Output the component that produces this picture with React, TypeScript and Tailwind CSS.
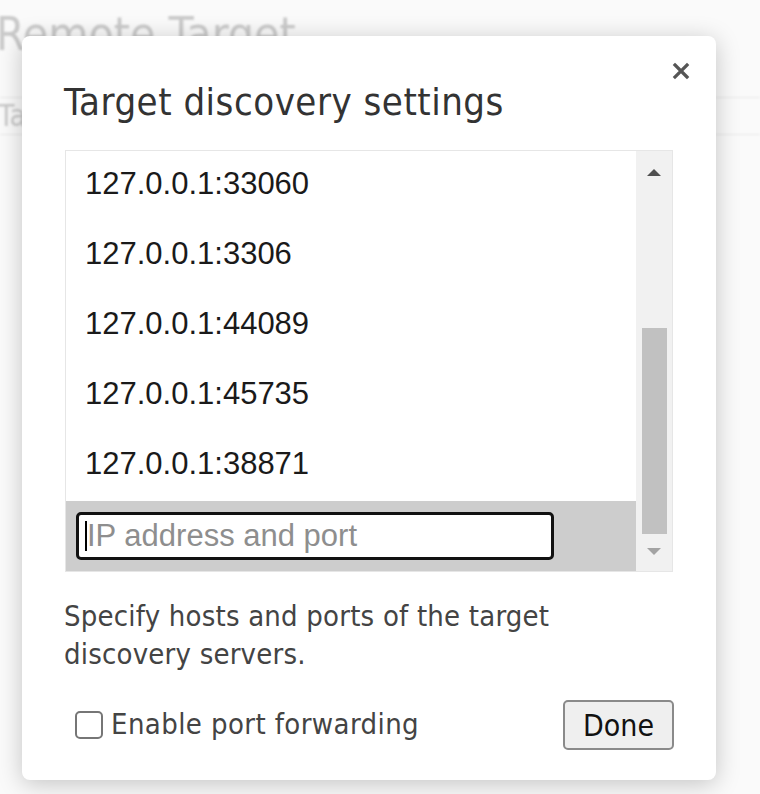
import React from 'react'

const hosts = [
  '127.0.0.1:33060',
  '127.0.0.1:3306',
  '127.0.0.1:44089',
  '127.0.0.1:45735',
  '127.0.0.1:38871',
]

const uiFont = "font-['DejaVu_Sans',sans-serif] [font-stretch:condensed]"
const listFont = "font-['Liberation_Sans',Arial,sans-serif]"

export default function App() {
  return (
    <div className="relative h-[794px] w-[760px] overflow-hidden bg-[#fafafa]">
      {/* page behind the dialog */}
      <div className="flex flex-col blur-[1px] opacity-60">
        <div className={`${uiFont} -ml-[4px] mt-[10px] text-[46px] leading-[48px] text-[#aaaaaa]`}>
          Remote Target <span className="text-[14px]">#ws://</span>
        </div>
        <div className="mt-[28px] h-px w-full bg-[#dddddd]" />
        <div className={`${uiFont} -ml-[2px] h-[36px] text-[30px] leading-[36px] text-[#aaaaaa]`}>Ta</div>
        <div className="h-px w-full bg-[#dddddd]" />
      </div>

      {/* dialog */}
      <div className="absolute left-[22px] top-[36px] flex h-[744px] w-[694px] flex-col rounded-[8px] bg-white pl-[42px] pr-[42px] shadow-[0_4px_24px_rgba(0,0,0,0.22)]">
        <button className="absolute right-[21px] top-[21px] flex h-[28px] w-[28px] items-center justify-center text-[#555555]">
          <svg width="18" height="18" viewBox="0 0 18 18">
            <path d="M3 3 L15 15 M15 3 L3 15" stroke="currentColor" strokeWidth="3.2" strokeLinecap="square" />
          </svg>
        </button>

        <h1 className={`${uiFont} mt-[44px] text-[38px] leading-[44px] tracking-[0.5px] text-[#333333]`}>
          Target discovery settings
        </h1>

        <div className="ml-px mt-[26px] flex h-[422px] w-[608px] border border-[#e6e6e6]">
          <div className={`${listFont} flex flex-1 flex-col text-[31px] text-[#1a1a1a]`}>
            {hosts.map((h) => (
              <div key={h} className="flex h-[70px] shrink-0 items-center pb-[4px] pl-[19px]">
                {h}
              </div>
            ))}
            <div className="flex h-[70px] shrink-0 items-center bg-[#cdcdcd] pl-[10px]">
              <div className="flex h-[48px] w-[478px] items-center rounded-[5px] border-[3px] border-[#111111] bg-white pl-[6px]">
                <span className="h-[30px] w-[2px] bg-black" />
                <span className="text-[#8e8e8e]">IP address and port</span>
              </div>
            </div>
          </div>
          <div className="flex w-[36px] flex-col items-center bg-[#f1f1f1]">
            <svg className="mt-[17px]" width="16" height="8" viewBox="0 0 16 8">
              <path d="M1 8 L8 1 L15 8 Z" fill="#505050" />
            </svg>
            <div className="mt-[152px] h-[206px] w-[25px] bg-[#c1c1c1]" />
            <svg className="mt-[14px]" width="16" height="8" viewBox="0 0 16 8">
              <path d="M1 0 L8 7 L15 0 Z" fill="#a3a3a3" />
            </svg>
          </div>
        </div>

        <p className={`${uiFont} mt-[25px] text-[29px] leading-[38px] tracking-[0.2px] text-[#444444]`}>
          Specify hosts and ports of the target
          <br />
          discovery servers.
        </p>

        <div className="mt-[27px] flex items-center justify-between">
          <label className={`${uiFont} flex items-center text-[29px] tracking-[0.4px] text-[#444444]`}>
            <span className="ml-[11px] mr-[8px] h-[28px] w-[28px] rounded-[5px] border-2 border-[#767676] bg-white" />
            Enable port forwarding
          </label>
          <button className={`${uiFont} h-[50px] w-[111px] rounded-[5px] border-2 border-[#8a8a8a] bg-[#efefef] text-[30px] text-[#111111]`}>
            Done
          </button>
        </div>
      </div>
    </div>
  )
}
